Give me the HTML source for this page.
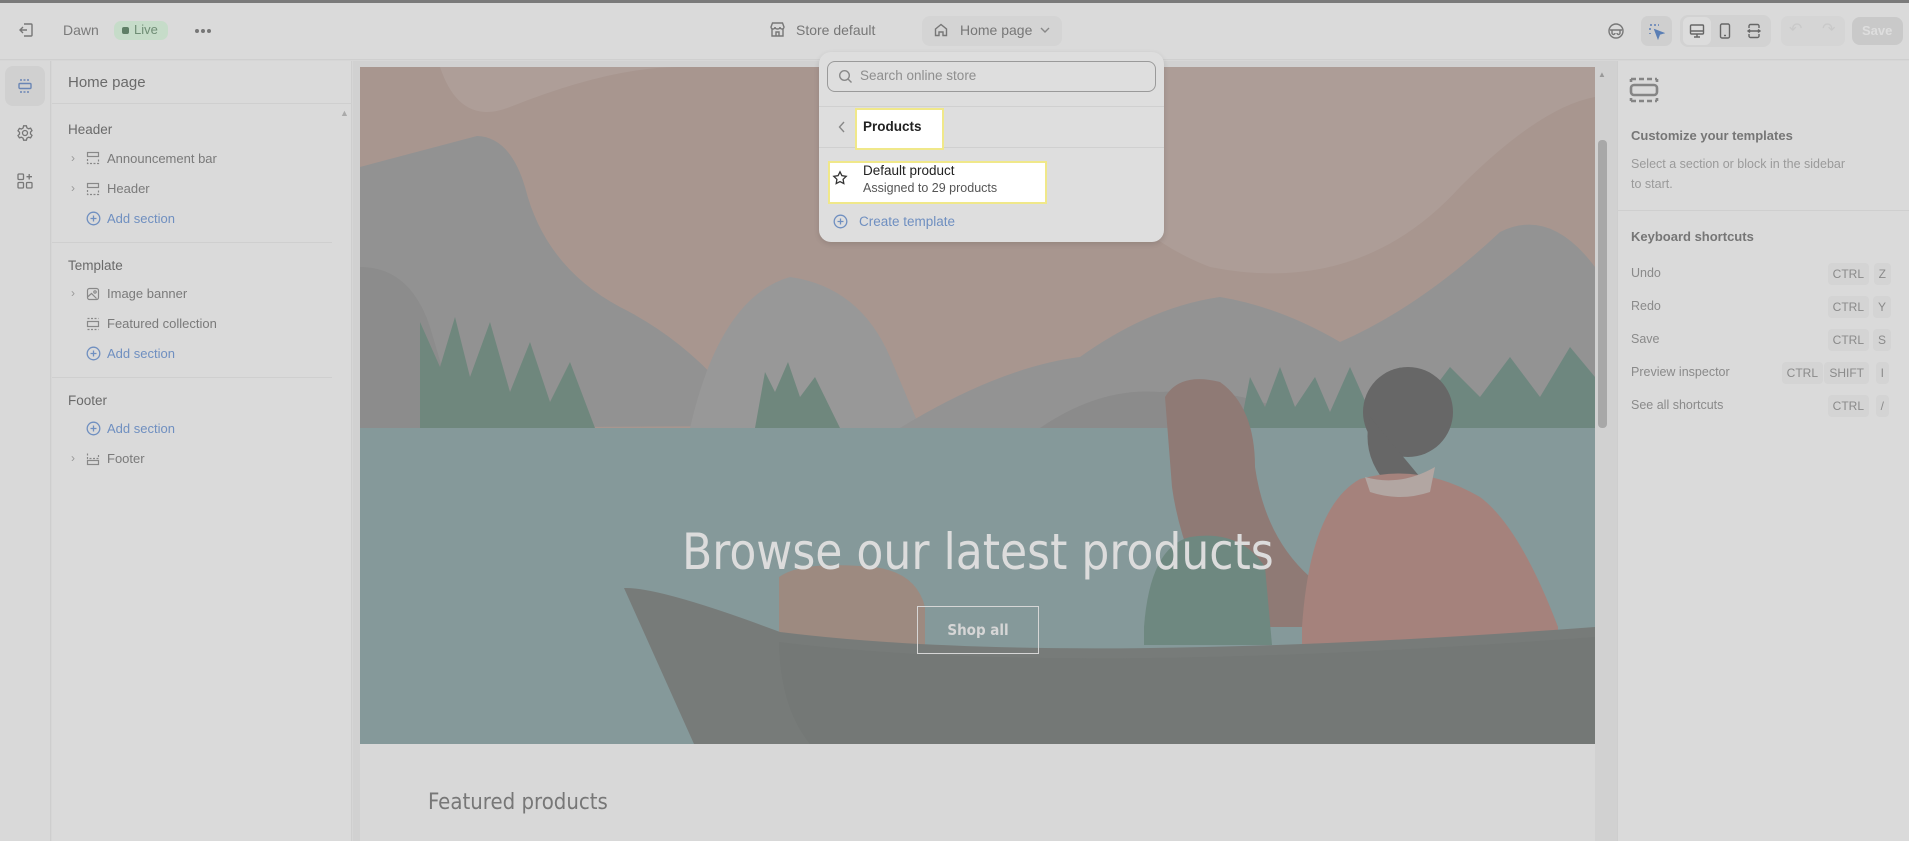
<!DOCTYPE html>
<html><head><meta charset="utf-8"><style>
*{box-sizing:border-box;margin:0;padding:0}
body{width:1909px;height:841px;overflow:hidden;background:#d6d6d6;font-family:"Liberation Sans",sans-serif;color:#6e6e6e;position:relative}
.a{position:absolute}
.t{position:absolute;white-space:nowrap}
.kbd{position:absolute;height:22px;line-height:22px;padding:0 5px;background:#d4d4d4;border-radius:4px;font-size:12px;color:#8a8a8a;top:-3px}
</style></head><body>
<div class="a" style="left:0;top:0;width:1909px;height:3px;background:#7a7a7a"></div>
<!-- top bar -->
<div class="a" style="left:0;top:3px;width:1909px;height:57px;background:#dadada;border-bottom:1px solid #cfcfcf"></div>
<svg class="a" style="left:17px;top:21px" width="18" height="18" viewBox="0 0 18 18" fill="none" stroke="#777" stroke-width="1.4"><path d="M7 3h7a1 1 0 0 1 1 1v10a1 1 0 0 1-1 1H7M3 9h7M6 6L3 9l3 3"/></svg>
<div class="t" style="left:63px;top:22px;font-size:14px;color:#7a7a7a">Dawn</div>
<div class="a" style="left:114px;top:21px;width:54px;height:19px;border-radius:7px;background:#c6dcc9"></div>
<div class="a" style="left:122px;top:27px;width:7px;height:7px;border-radius:2px;background:#5f7f66"></div>
<div class="t" style="left:134px;top:22px;font-size:13px;color:#6f8d75">Live</div>
<div class="a" style="left:195px;top:29px;width:4px;height:4px;border-radius:2px;background:#777"></div>
<div class="a" style="left:201px;top:29px;width:4px;height:4px;border-radius:2px;background:#777"></div>
<div class="a" style="left:207px;top:29px;width:4px;height:4px;border-radius:2px;background:#777"></div>
<svg class="a" style="left:769px;top:21px" width="17" height="17" viewBox="0 0 17 17" fill="none" stroke="#777" stroke-width="1.4"><path d="M2 6l1.5-4h10L15 6c0 1.2-1 2-2 2s-2-.8-2-2c0 1.2-1 2-2.5 2S6 7.2 6 6c0 1.2-1 2-2 2S2 7.2 2 6zM3 8v7h11V8M7 15v-4h3v4"/></svg>
<div class="t" style="left:796px;top:22px;font-size:14px;color:#777">Store default</div>
<div class="a" style="left:922px;top:16px;width:140px;height:30px;border-radius:8px;background:#d4d4d4"></div>
<svg class="a" style="left:933px;top:22px" width="16" height="16" viewBox="0 0 16 16" fill="none" stroke="#777" stroke-width="1.4"><path d="M2.5 7L8 2.5 13.5 7v6.5h-3.5V10H6v3.5H2.5z"/></svg>
<div class="t" style="left:960px;top:22px;font-size:14px;color:#777">Home page</div>
<svg class="a" style="left:1040px;top:27px" width="10" height="7" viewBox="0 0 10 7" fill="none" stroke="#888" stroke-width="1.4"><path d="M1 1l4 4 4-4"/></svg>
<svg class="a" style="left:1607px;top:22px" width="18" height="18" viewBox="0 0 18 18" fill="none" stroke="#777" stroke-width="1.4"><circle cx="9" cy="9" r="7"/><path d="M3 8h12M5 8v3a1.5 1.5 0 0 0 3 0M10 11a1.5 1.5 0 0 0 3 0V8"/></svg>
<div class="a" style="left:1641px;top:16px;width:31px;height:30px;border-radius:7px;background:#cfcfcf"></div>
<svg class="a" style="left:1648px;top:23px" width="17" height="17" viewBox="0 0 17 17" fill="none" stroke="#5b7fb5" stroke-width="1.5"><path d="M2 2h2M6 2h2M2 5v2M2 10v1M10 2h1" stroke-dasharray="2 1.5"/><path d="M7 7l8 3-3.5 1L10 15z" fill="#5b7fb5"/></svg>
<div class="a" style="left:1680px;top:15px;width:91px;height:32px;border-radius:8px;background:#d2d2d2"></div>
<div class="a" style="left:1683px;top:17px;width:28px;height:28px;border-radius:6px;background:#dcdcdc"></div>
<svg class="a" style="left:1688px;top:22px" width="18" height="18" viewBox="0 0 18 18" fill="none" stroke="#666" stroke-width="1.4"><rect x="2.5" y="3" width="13" height="9" rx="1"/><path d="M2.5 9h13M9 12v3M6 15h6"/></svg>
<svg class="a" style="left:1716px;top:22px" width="18" height="18" viewBox="0 0 18 18" fill="none" stroke="#666" stroke-width="1.4"><rect x="4.5" y="2" width="9" height="14" rx="1.5"/><path d="M8 13.5h2"/></svg>
<svg class="a" style="left:1745px;top:22px" width="18" height="18" viewBox="0 0 18 18" fill="none" stroke="#666" stroke-width="1.4"><path d="M4 6V4a1.5 1.5 0 0 1 1.5-1.5h7A1.5 1.5 0 0 1 14 4v2M4 12v2a1.5 1.5 0 0 0 1.5 1.5h7A1.5 1.5 0 0 0 14 14v-2M3 9h12M5 7.5L3 9l2 1.5M13 7.5L15 9l-2 1.5"/></svg>
<div class="a" style="left:1781px;top:16px;width:64px;height:30px;border-radius:7px;background:#d5d5d5"></div>
<div class="t" style="left:1789px;top:19px;font-size:16px;color:#c9c9c9">↶</div>
<div class="t" style="left:1822px;top:19px;font-size:16px;color:#c9c9c9">↷</div>
<div class="a" style="left:1852px;top:17px;width:51px;height:28px;border-radius:8px;background:#c9c9c9"></div>
<div class="t" style="left:1862px;top:23px;font-size:13px;font-weight:bold;color:#dedede">Save</div>

<!-- left rail -->
<div class="a" style="left:0;top:61px;width:51px;height:780px;background:#d9d9d9;border-right:1px solid #cecece"></div>
<div class="a" style="left:5px;top:66px;width:40px;height:40px;border-radius:8px;background:#d0d0d0"></div>
<svg class="a" style="left:16px;top:77px" width="18" height="18" viewBox="0 0 18 18" fill="none" stroke="#6a86b5" stroke-width="1.4"><path d="M4 3h10M4 15h10" stroke-dasharray="2 1.5"/><rect x="3" y="6.5" width="12" height="5" rx="1"/></svg>
<svg class="a" style="left:16px;top:124px" width="18" height="18" viewBox="0 0 18 18" fill="none" stroke="#777" stroke-width="1.3"><circle cx="9" cy="9" r="2.5"/><path d="M7.6 1.8h2.8l.5 2 1.7 1 2-.6 1.4 2.4-1.5 1.5v1.8l1.5 1.5-1.4 2.4-2-.6-1.7 1-.5 2H7.6l-.5-2-1.7-1-2 .6L2 11.6l1.5-1.5V8.3L2 6.8l1.4-2.4 2 .6 1.7-1z"/></svg>
<svg class="a" style="left:16px;top:172px" width="18" height="18" viewBox="0 0 18 18" fill="none" stroke="#777" stroke-width="1.3"><rect x="2" y="2" width="5.5" height="5.5" rx="1"/><rect x="2" y="10.5" width="5.5" height="5.5" rx="1"/><rect x="10.5" y="10.5" width="5.5" height="5.5" rx="1"/><path d="M13.2 2v5.5M10.5 4.7H16"/></svg>

<!-- sidebar -->
<div class="a" style="left:52px;top:61px;width:300px;height:780px;background:#dadada;border-right:1px solid #cecece"></div>
<div class="t" style="left:68px;top:74px;font-size:15px;color:#6a6a6a">Home page</div>
<div class="a" style="left:52px;top:103px;width:300px;height:1px;background:#cfcfcf"></div>
<div class="t" style="left:340px;top:108px;font-size:9px;color:#aaa">▲</div>
<div class="t" style="left:68px;top:122px;font-size:13.5px;color:#6a6a6a">Header</div>
<div class="t" style="left:71px;top:151px;font-size:12px;color:#999">›</div>
<svg class="a" style="left:86px;top:151px" width="14" height="14" viewBox="0 0 14 14" fill="none" stroke="#888" stroke-width="1.2"><rect x="1.5" y="1.5" width="11" height="4"/><path d="M1.5 8v4.5h11V8" stroke-dasharray="2 1.5"/></svg>
<div class="t" style="left:107px;top:151px;font-size:13px;color:#7a7a7a">Announcement bar</div>
<div class="t" style="left:71px;top:181px;font-size:12px;color:#999">›</div>
<svg class="a" style="left:86px;top:182px" width="14" height="14" viewBox="0 0 14 14" fill="none" stroke="#888" stroke-width="1.2"><rect x="1.5" y="1.5" width="11" height="4"/><path d="M1.5 8v4.5h11V8" stroke-dasharray="2 1.5"/></svg>
<div class="t" style="left:107px;top:181px;font-size:13px;color:#7a7a7a">Header</div>
<svg class="a" style="left:86px;top:211px" width="15" height="15" viewBox="0 0 15 15" fill="none" stroke="#6f8fc0" stroke-width="1.3"><circle cx="7.5" cy="7.5" r="6.3"/><path d="M7.5 4.5v6M4.5 7.5h6"/></svg>
<div class="t" style="left:107px;top:211px;font-size:13px;color:#6f8fc0">Add section</div>
<div class="a" style="left:52px;top:242px;width:280px;height:1px;background:#cfcfcf"></div>
<div class="t" style="left:68px;top:258px;font-size:13.5px;color:#6a6a6a">Template</div>
<div class="t" style="left:71px;top:286px;font-size:12px;color:#999">›</div>
<svg class="a" style="left:86px;top:287px" width="14" height="14" viewBox="0 0 14 14" fill="none" stroke="#888" stroke-width="1.2"><rect x="1.5" y="1.5" width="11" height="11" rx="2"/><circle cx="9" cy="5" r="1.2"/><path d="M1.5 10l4-3.5 5 5"/></svg>
<div class="t" style="left:107px;top:286px;font-size:13px;color:#7a7a7a">Image banner</div>
<svg class="a" style="left:86px;top:317px" width="14" height="14" viewBox="0 0 14 14" fill="none" stroke="#888" stroke-width="1.2"><path d="M1.5 1.5h11M1.5 12.5h11" stroke-dasharray="2 1.5"/><rect x="1.5" y="4.5" width="11" height="5"/></svg>
<div class="t" style="left:107px;top:316px;font-size:13px;color:#7a7a7a">Featured collection</div>
<svg class="a" style="left:86px;top:346px" width="15" height="15" viewBox="0 0 15 15" fill="none" stroke="#6f8fc0" stroke-width="1.3"><circle cx="7.5" cy="7.5" r="6.3"/><path d="M7.5 4.5v6M4.5 7.5h6"/></svg>
<div class="t" style="left:107px;top:346px;font-size:13px;color:#6f8fc0">Add section</div>
<div class="a" style="left:52px;top:377px;width:280px;height:1px;background:#cfcfcf"></div>
<div class="t" style="left:68px;top:393px;font-size:13.5px;color:#6a6a6a">Footer</div>
<svg class="a" style="left:86px;top:421px" width="15" height="15" viewBox="0 0 15 15" fill="none" stroke="#6f8fc0" stroke-width="1.3"><circle cx="7.5" cy="7.5" r="6.3"/><path d="M7.5 4.5v6M4.5 7.5h6"/></svg>
<div class="t" style="left:107px;top:421px;font-size:13px;color:#6f8fc0">Add section</div>
<div class="t" style="left:71px;top:451px;font-size:12px;color:#999">›</div>
<svg class="a" style="left:86px;top:452px" width="14" height="14" viewBox="0 0 14 14" fill="none" stroke="#888" stroke-width="1.2"><path d="M1.5 1.5v5h11v-5" stroke-dasharray="2 1.5"/><rect x="1.5" y="8.5" width="11" height="4"/></svg>
<div class="t" style="left:107px;top:451px;font-size:13px;color:#7a7a7a">Footer</div>

<!-- preview -->
<div class="a" style="left:353px;top:61px;width:1264px;height:780px;background:#d1d1d1"></div>
<div class="a" style="left:360px;top:744px;width:1235px;height:97px;background:#d8d8d8"></div>
<div class="t" style="left:428px;top:790px;font-size:22px;color:#777;font-family:'DejaVu Sans Condensed','Liberation Sans Narrow',sans-serif;font-weight:300">Featured products</div>
<svg class="a" style="left:360px;top:67px" width="1235" height="677" viewBox="0 0 1235 677">
<rect width="1235" height="677" fill="#a8968f"/>
<path d="M80 0 Q100 60 150 40 Q250 0 320 0Z" fill="#ae9e98"/>
<path d="M700 0 Q720 150 850 200 Q1000 230 1100 120 Q1180 40 1235 30 L1235 0Z" fill="#ad9d97"/>
<path d="M0 100 L117 69 Q150 70 165 120 Q185 200 260 240 Q340 280 394 359 L0 361Z" fill="#929292"/>
<path d="M0 200 Q50 200 70 260 L100 361 L0 361Z" fill="#8c8c8c"/>
<path d="M330 361 Q360 230 430 210 Q500 220 530 290 L560 361Z" fill="#989898"/>
<path d="M540 361 Q640 300 720 290 Q790 240 860 230 Q920 240 980 275 Q1060 240 1140 165 Q1190 140 1235 200 L1235 361Z" fill="#939393"/>
<path d="M680 361 Q740 320 800 325 Q870 320 930 345 L960 361Z" fill="#8b8b8b"/>
<path d="M60 361 L60 255 L80 300 L95 250 L110 310 L130 255 L150 325 L170 275 L190 335 L210 295 L235 361Z" fill="#6f877d"/>
<path d="M395 361 L405 305 L415 325 L428 295 L440 330 L455 310 L480 361Z" fill="#6f877d"/>
<path d="M880 361 L890 310 L905 340 L920 300 L935 340 L955 310 L970 345 L990 300 L1010 345 L1040 300 L1060 340 L1090 300 L1120 330 L1150 290 L1180 330 L1210 280 L1235 310 L1235 361Z" fill="#6e877f"/>
<rect x="0" y="361" width="1235" height="316" fill="#85999a"/>
<path d="M805 330 Q820 305 860 315 Q895 340 895 400 Q905 470 950 510 L950 560 L860 560 Q820 480 812 420Z" fill="#8f7a75"/>
<path d="M784 560 Q790 480 830 470 Q880 462 905 500 L912 578 L784 578Z" fill="#6e8880"/>
<circle cx="1048" cy="345" r="45" fill="#676767"/>
<path d="M1010 350 Q1000 390 1030 420 L1060 410Z" fill="#676767"/>
<path d="M942 560 Q950 440 1000 412 Q1060 395 1120 430 Q1160 460 1198 560 L1198 578 L942 578Z" fill="#a5827c"/>
<path d="M1005 410 Q1040 420 1075 400 L1070 425 Q1040 435 1010 425Z" fill="#b2a6a2"/>
<path d="M419 510 Q440 495 500 499 Q555 500 565 540 L565 578 L419 578Z" fill="#9d8a80"/>
<path d="M264 521 Q300 520 420 565 Q700 600 1235 560 L1235 677 L334 677Z" fill="#777b79"/>
<path d="M419 575 Q420 640 450 677 L1235 677 L1235 570 Q700 610 419 575Z" fill="#747876"/>
</svg>
<div class="t" style="left:360px;top:523px;width:1235px;text-align:center;font-size:50px;color:#dcdcdc;font-family:'DejaVu Sans Condensed','Liberation Sans Narrow',sans-serif;font-weight:300"><span style="display:inline-block;transform:scaleX(0.98)">Browse our latest products</span></div>
<div class="a" style="left:917px;top:606px;width:122px;height:48px;border:1px solid #d6d6d6"></div>
<div class="t" style="left:917px;top:621px;width:122px;text-align:center;font-size:15px;font-weight:bold;color:#d6d6d6;font-family:'DejaVu Sans Condensed',sans-serif">Shop all</div>
<div class="a" style="left:1598px;top:140px;width:9px;height:288px;border-radius:4px;background:#a8a8a8"></div>
<div class="t" style="left:1598px;top:70px;font-size:8px;color:#999">▲</div>

<!-- right panel -->
<div class="a" style="left:1617px;top:61px;width:292px;height:780px;background:#dadada;border-left:1px solid #cecece"></div>
<svg class="a" style="left:1629px;top:75px" width="30" height="30" viewBox="0 0 30 30" fill="none" stroke="#858585" stroke-width="2.6"><path d="M2 4h26M2 26h26" stroke-dasharray="5 3"/><path d="M2 4v3M28 4v3M2 26v-3M28 26v-3"/><rect x="2" y="10" width="26" height="10" rx="3"/></svg>
<div class="t" style="left:1631px;top:128px;font-size:13px;font-weight:bold;color:#767676">Customize your templates</div>
<div class="t" style="left:1631px;top:154px;font-size:12.5px;color:#9a9a9a;line-height:20px">Select a section or block in the sidebar<br>to start.</div>
<div class="a" style="left:1617px;top:210px;width:292px;height:1px;background:#cfcfcf"></div>
<div class="t" style="left:1631px;top:229px;font-size:13px;font-weight:bold;color:#767676">Keyboard shortcuts</div>
<div class="a" style="left:1631px;top:266px;width:258px"><div class="t" style="left:0;font-size:12.5px;color:#8a8a8a">Undo</div><span class="kbd" style="right:20px">CTRL</span><span class="kbd" style="right:-2px">Z</span></div>
<div class="a" style="left:1631px;top:299px;width:258px"><div class="t" style="left:0;font-size:12.5px;color:#8a8a8a">Redo</div><span class="kbd" style="right:20px">CTRL</span><span class="kbd" style="right:-2px">Y</span></div>
<div class="a" style="left:1631px;top:332px;width:258px"><div class="t" style="left:0;font-size:12.5px;color:#8a8a8a">Save</div><span class="kbd" style="right:20px">CTRL</span><span class="kbd" style="right:-2px">S</span></div>
<div class="a" style="left:1631px;top:365px;width:258px"><div class="t" style="left:0;font-size:12.5px;color:#8a8a8a">Preview inspector</div><span class="kbd" style="right:66px">CTRL</span><span class="kbd" style="right:20px">SHIFT</span><span class="kbd" style="right:0">I</span></div>
<div class="a" style="left:1631px;top:398px;width:258px"><div class="t" style="left:0;font-size:12.5px;color:#8a8a8a">See all shortcuts</div><span class="kbd" style="right:20px">CTRL</span><span class="kbd" style="right:0">/</span></div>

<!-- dropdown -->
<div class="a" style="left:819px;top:52px;width:345px;height:190px;background:#dedede;border-radius:12px;box-shadow:0 2px 6px rgba(0,0,0,.12)"></div>
<div class="a" style="left:827px;top:61px;width:329px;height:31px;border:1px solid #9a9a9a;border-radius:8px;background:#dedede"></div>
<svg class="a" style="left:838px;top:69px" width="15" height="15" viewBox="0 0 15 15" fill="none" stroke="#888" stroke-width="1.4"><circle cx="6.5" cy="6.5" r="4.8"/><path d="M10 10l3.5 3.5"/></svg>
<div class="t" style="left:860px;top:68px;font-size:13.5px;color:#8e8e8e">Search online store</div>
<div class="a" style="left:819px;top:106px;width:345px;height:1px;background:#d0d0d0"></div>
<div class="a" style="left:819px;top:147px;width:345px;height:1px;background:#d0d0d0"></div>
<svg class="a" style="left:838px;top:121px" width="8" height="12" viewBox="0 0 8 12" fill="none" stroke="#888" stroke-width="1.4"><path d="M6 1L1.5 6 6 11"/></svg>
<div class="a" style="left:855px;top:108px;width:89px;height:42px;background:#fff;border:2px solid #f0e88a"></div>
<div class="t" style="left:863px;top:119px;font-size:13.5px;font-weight:bold;color:#222">Products</div>
<div class="a" style="left:828px;top:161px;width:219px;height:43px;background:#fff;border:2px solid #f0e88a"></div>
<svg class="a" style="left:832px;top:170px" width="16" height="16" viewBox="0 0 16 16" fill="none" stroke="#333" stroke-width="1.3"><path d="M8 1.8l1.9 3.9 4.3.6-3.1 3 .7 4.3L8 11.6l-3.8 2 .7-4.3-3.1-3 4.3-.6z"/></svg>
<div class="t" style="left:863px;top:163px;font-size:13.5px;color:#222">Default product</div>
<div class="t" style="left:863px;top:181px;font-size:12.5px;color:#555">Assigned to 29 products</div>
<svg class="a" style="left:833px;top:214px" width="15" height="15" viewBox="0 0 15 15" fill="none" stroke="#6f8fc0" stroke-width="1.3"><circle cx="7.5" cy="7.5" r="6.3"/><path d="M7.5 4.5v6M4.5 7.5h6"/></svg>
<div class="t" style="left:859px;top:214px;font-size:13.5px;color:#6f8fc0">Create template</div>
</body></html>
